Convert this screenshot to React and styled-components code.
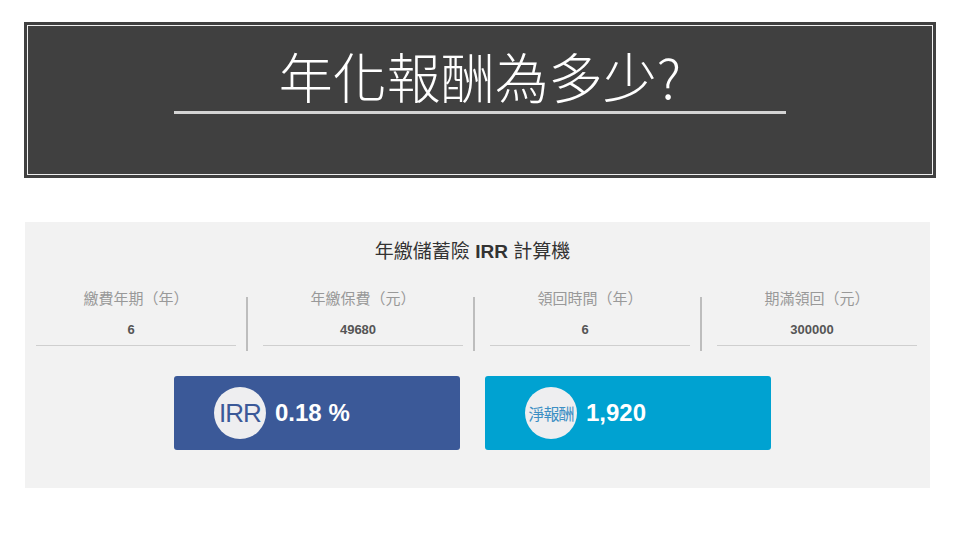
import { createGlobalStyle } from 'styled-components';
import styled from 'styled-components';

const GlobalStyle = createGlobalStyle`
  body {
    margin: 0;
    background: #ffffff;
    font-family: "Liberation Sans", "Noto Sans CJK TC", sans-serif;
  }
`;

const Page = styled.div`
  width: 960px;
  height: 540px;
  padding-top: 22px;
  box-sizing: border-box;
`;

const Header = styled.div`
  margin-left: 24px;
  width: 912px;
  height: 156px;
  box-sizing: border-box;
  background: #404040;
  padding: 3px;
`;

const HeaderInner = styled.div`
  height: 100%;
  box-sizing: border-box;
  border: 1px solid #f0f0f0;
  display: flex;
  flex-direction: column;
  align-items: center;
  padding-top: 19px;
`;

const Heading = styled.h1`
  margin: 0;
  color: #ffffff;
  font-family: "Noto Sans CJK TC", sans-serif;
  font-weight: 300;
  font-size: 54px;
  line-height: 62px;
`;

const Rule = styled.div`
  width: 612px;
  height: 3px;
  margin-top: 4px;
  background: #d4d4d4;
`;

const Panel = styled.div`
  margin: 44px 0 0 25px;
  width: 905px;
  height: 266px;
  background: #f2f2f2;
  display: flex;
  flex-direction: column;
`;

const PanelTitle = styled.div`
  margin: 18px 0 0 -10px;
  text-align: center;
  font-size: 19px;
  line-height: 24px;
  color: #333;
  b {
    font-weight: bold;
  }
`;

const Fields = styled.div`
  display: flex;
  align-items: flex-start;
  padding-left: 11px;
  margin-top: 18px;
`;

const Field = styled.div`
  width: 200px;
  display: flex;
  flex-direction: column;
  align-items: center;
  border-bottom: 1px solid #cfcfcf;
  padding-top: 6px;
`;

const Label = styled.div`
  font-family: "Noto Sans CJK TC", sans-serif;
  font-size: 15px;
  line-height: 20px;
  color: #999;
`;

const Value = styled.div`
  margin: 14px 10px 7px 0;
  font-size: 13px;
  line-height: 16px;
  font-weight: bold;
  color: #555;
`;

const Divider = styled.div`
  width: 2px;
  height: 54px;
  background: #bdbdbd;
  margin: 15px 15px 0 10px;
`;

const Results = styled.div`
  display: flex;
  gap: 25px;
  padding-left: 149px;
  margin-top: 25px;
`;

const Result = styled.div`
  width: 286px;
  height: 74px;
  border-radius: 3px;
  background: ${p => p.color};
  display: flex;
  align-items: center;
  padding-left: 40px;
  box-sizing: border-box;
  gap: 9px;
`;

const Badge = styled.div`
  width: 52px;
  height: 52px;
  border-radius: 50%;
  background: #eeeef0;
  display: flex;
  align-items: center;
  justify-content: center;
  color: ${p => p.color};
  font-size: ${p => p.size}px;
  letter-spacing: -1px;
  white-space: nowrap;
`;

const Amount = styled.div`
  color: #ffffff;
  font-size: 24px;
  font-weight: bold;
`;

const fields = [
  ['繳費年期（年）', '6'],
  ['年繳保費（元）', '49680'],
  ['領回時間（年）', '6'],
  ['期滿領回（元）', '300000'],
];

export default function App() {
  return (
    <Page>
      <GlobalStyle />
      <Header>
        <HeaderInner>
          <Heading>年化報酬為多少?</Heading>
          <Rule />
        </HeaderInner>
      </Header>
      <Panel>
        <PanelTitle>年繳儲蓄險 <b>IRR</b> 計算機</PanelTitle>
        <Fields>
          {fields.map(([label, value], i) => (
            <>
              <Field key={label}>
                <Label>{label}</Label>
                <Value>{value}</Value>
              </Field>
              {i < fields.length - 1 && <Divider key={'d' + i} />}
            </>
          ))}
        </Fields>
        <Results>
          <Result color="#3b5998">
            <Badge color="#3b5998" size={26}>IRR</Badge>
            <Amount>0.18 %</Amount>
          </Result>
          <Result color="#00a2d1">
            <Badge color="#3c8fc4" size={16}>淨報酬</Badge>
            <Amount>1,920</Amount>
          </Result>
        </Results>
      </Panel>
    </Page>
  );
}
